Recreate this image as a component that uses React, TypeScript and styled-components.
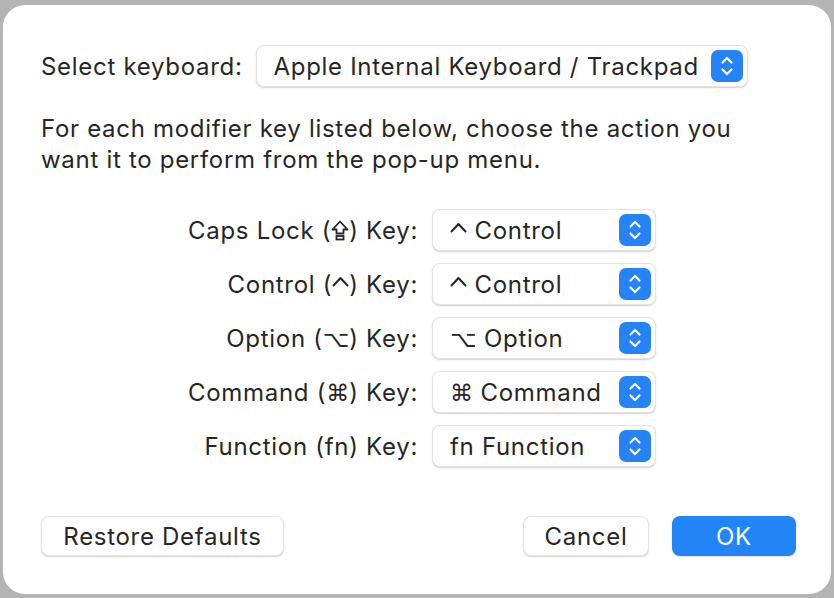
import styled, { createGlobalStyle } from "styled-components";

const GlobalStyle = createGlobalStyle`
  html, body {
    margin: 0;
    padding: 0;
    background: #b4b4b4;
  }
  body {
    font-family: "Inter", "Liberation Sans", sans-serif;
    color: #262626;
  }
`;

const Dialog = styled.div`
  box-sizing: border-box;
  margin: 5px 3px 4px 3px;
  height: 589px;
  background: #ffffff;
  border-radius: 22px;
  padding: 40px 35px 38px 38px;
  display: flex;
  flex-direction: column;
  font-size: 24px;
  letter-spacing: 0.7px;
`;

const KeyboardRow = styled.div`
  display: flex;
  align-items: center;
  gap: 13px;
`;

const Label = styled.span`
  white-space: nowrap;
`;

const PopUp = styled.div<{ $width?: number }>`
  box-sizing: border-box;
  display: flex;
  align-items: center;
  justify-content: space-between;
  height: 42px;
  width: ${(p) => (p.$width ? `${p.$width}px` : "auto")};
  padding: 0 4px 0 17px;
  gap: 12px;
  background: #fff;
  border-radius: 8px;
  border: 1px solid #e4e4e4;
  box-shadow: 0 1px 1.5px rgba(0, 0, 0, 0.18);
  white-space: nowrap;
`;

const Stepper = styled.span`
  display: flex;
  align-items: center;
  justify-content: center;
  width: 32px;
  height: 32px;
  border-radius: 7px;
  background: #2583f7;
  flex-shrink: 0;
`;

const Intro = styled.p`
  margin: 26px 0 0 0;
  line-height: 31px;
`;

const ModifierGrid = styled.div`
  display: grid;
  grid-template-columns: 377px 224px;
  column-gap: 14px;
  row-gap: 12px;
  margin-top: 34px;
  align-items: center;
`;

const KeyLabel = styled.span`
  text-align: right;
  white-space: nowrap;
`;

const Glyph = styled.span`
  font-family: "DejaVu Sans", sans-serif;
  font-size: 23px;
  letter-spacing: 0;
`;

const SymbolIcon = styled.svg`
  display: inline-block;
  vertical-align: -2px;
  overflow: visible;
`;

const Footer = styled.div`
  margin-top: auto;
  display: flex;
  align-items: center;
  gap: 23px;
`;

const Spacer = styled.div`
  flex: 1;
`;

const Button = styled.button<{ $primary?: boolean; $width: number }>`
  box-sizing: border-box;
  height: 40px;
  width: ${(p) => p.$width}px;
  font-family: inherit;
  font-size: 24px;
  letter-spacing: 0.7px;
  border-radius: 8px;
  cursor: pointer;
  border: ${(p) => (p.$primary ? "none" : "1px solid #e4e4e4")};
  background: ${(p) => (p.$primary ? "#2184f7" : "#ffffff")};
  color: ${(p) => (p.$primary ? "#ffffff" : "#262626")};
  box-shadow: ${(p) =>
    p.$primary ? "0 1px 1.5px rgba(0,0,0,0.12)" : "0 1px 1.5px rgba(0, 0, 0, 0.18)"};
`;

function Chevrons() {
  return (
    <svg width="14" height="22" viewBox="0 0 14 22" fill="none">
      <path
        d="M2.5 7.5 L7 3 L11.5 7.5"
        stroke="#fff"
        strokeWidth="2.2"
        strokeLinecap="round"
        strokeLinejoin="round"
      />
      <path
        d="M2.5 14.5 L7 19 L11.5 14.5"
        stroke="#fff"
        strokeWidth="2.2"
        strokeLinecap="round"
        strokeLinejoin="round"
      />
    </svg>
  );
}

// control key symbol ⌃
function ControlSym() {
  return (
    <SymbolIcon width="17" height="20" viewBox="0 0 17 20" fill="none">
      <path
        d="M1.5 10.5 L8.5 3 L15.5 10.5"
        stroke="currentColor"
        strokeWidth="2"
        strokeLinecap="round"
        strokeLinejoin="round"
      />
    </SymbolIcon>
  );
}

// caps lock symbol ⇪
function CapsSym() {
  return (
    <SymbolIcon width="18" height="21" viewBox="0 0 18 21" fill="none">
      <path
        d="M9 1.5 L16.5 9.5 H12.5 V13.5 H5.5 V9.5 H1.5 Z"
        stroke="currentColor"
        strokeWidth="1.8"
        strokeLinejoin="round"
      />
      <rect x="5.5" y="16" width="7" height="3.5" stroke="currentColor" strokeWidth="1.8" />
    </SymbolIcon>
  );
}

type Sym = "caps" | "ctrl" | "opt" | "cmd" | "fn";

function SymbolMark({ sym }: { sym: Sym }) {
  if (sym === "caps") return <CapsSym />;
  if (sym === "ctrl") return <ControlSym />;
  if (sym === "opt") return <Glyph>⌥</Glyph>;
  if (sym === "cmd") return <Glyph>⌘</Glyph>;
  return <>fn</>;
}

const modifiers: { key: string; sym: Sym; actionSym: Sym; action: string }[] = [
  { key: "Caps Lock", sym: "caps", actionSym: "ctrl", action: "Control" },
  { key: "Control", sym: "ctrl", actionSym: "ctrl", action: "Control" },
  { key: "Option", sym: "opt", actionSym: "opt", action: "Option" },
  { key: "Command", sym: "cmd", actionSym: "cmd", action: "Command" },
  { key: "Function", sym: "fn", actionSym: "fn", action: "Function" },
];

export default function App() {
  return (
    <>
      <GlobalStyle />
      <Dialog>
        <KeyboardRow>
          <Label>Select keyboard:</Label>
          <PopUp>
            <span>Apple Internal Keyboard / Trackpad</span>
            <Stepper>
              <Chevrons />
            </Stepper>
          </PopUp>
        </KeyboardRow>
        <Intro>
          For each modifier key listed below, choose the action you
          <br />
          want it to perform from the pop-up menu.
        </Intro>
        <ModifierGrid>
          {modifiers.map((m) => (
            <>
              <KeyLabel key={m.key + "-l"}>
                {m.key} (<SymbolMark sym={m.sym} />) Key:
              </KeyLabel>
              <PopUp key={m.key + "-p"} $width={224}>
                <span>
                  <SymbolMark sym={m.actionSym} /> {m.action}
                </span>
                <Stepper>
                  <Chevrons />
                </Stepper>
              </PopUp>
            </>
          ))}
        </ModifierGrid>
        <Footer>
          <Button $width={243}>Restore Defaults</Button>
          <Spacer />
          <Button $width={126}>Cancel</Button>
          <Button $width={124} $primary>
            OK
          </Button>
        </Footer>
      </Dialog>
    </>
  );
}
